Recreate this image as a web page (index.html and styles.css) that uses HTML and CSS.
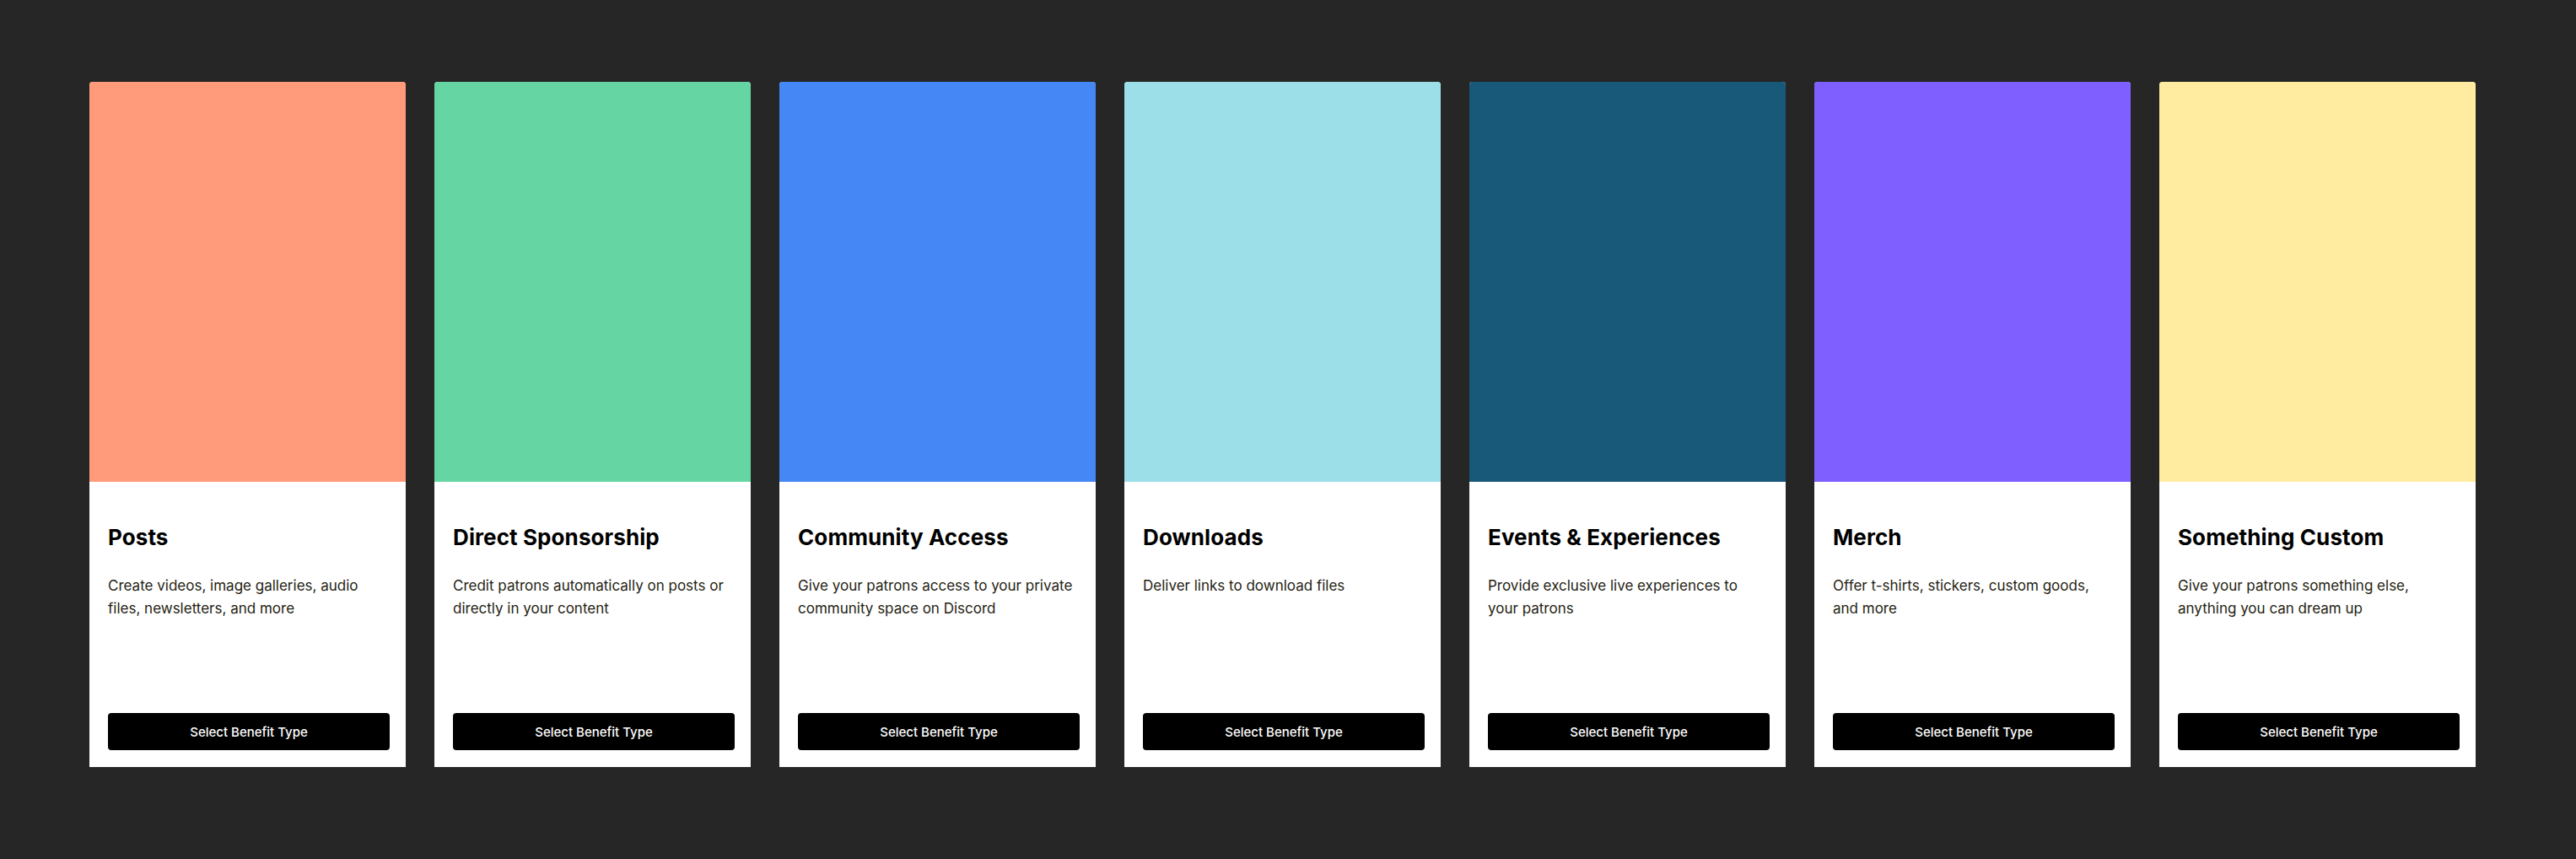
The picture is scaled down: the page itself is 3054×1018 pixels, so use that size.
FILE: index.html
```html
<!DOCTYPE html>
<html lang="en">
<head>
<meta charset="utf-8">
<title>Benefit types</title>
<link rel="stylesheet" href="styles.css">
</head>
<body>
<main class="benefits">
  <section class="card">
    <div class="swatch swatch-posts"></div>
    <div class="body">
      <h2 class="title">Posts</h2>
      <p class="desc">Create videos, image galleries, audio files, newsletters, and more</p>
      <button class="select">Select Benefit Type</button>
    </div>
  </section>
  <section class="card">
    <div class="swatch swatch-sponsor"></div>
    <div class="body">
      <h2 class="title">Direct Sponsorship</h2>
      <p class="desc">Credit patrons automatically on posts or directly in your content</p>
      <button class="select">Select Benefit Type</button>
    </div>
  </section>
  <section class="card">
    <div class="swatch swatch-community"></div>
    <div class="body">
      <h2 class="title">Community Access</h2>
      <p class="desc">Give your patrons access to your private community space on Discord</p>
      <button class="select">Select Benefit Type</button>
    </div>
  </section>
  <section class="card">
    <div class="swatch swatch-downloads"></div>
    <div class="body">
      <h2 class="title">Downloads</h2>
      <p class="desc">Deliver links to download files</p>
      <button class="select">Select Benefit Type</button>
    </div>
  </section>
  <section class="card">
    <div class="swatch swatch-events"></div>
    <div class="body">
      <h2 class="title">Events &amp; Experiences</h2>
      <p class="desc">Provide exclusive live experiences to your patrons</p>
      <button class="select">Select Benefit Type</button>
    </div>
  </section>
  <section class="card">
    <div class="swatch swatch-merch"></div>
    <div class="body">
      <h2 class="title">Merch</h2>
      <p class="desc">Offer t-shirts, stickers, custom goods, and more</p>
      <button class="select">Select Benefit Type</button>
    </div>
  </section>
  <section class="card">
    <div class="swatch swatch-custom"></div>
    <div class="body">
      <h2 class="title">Something Custom</h2>
      <p class="desc">Give your patrons something else, anything you can dream up</p>
      <button class="select">Select Benefit Type</button>
    </div>
  </section>
</main>
</body>
</html>
```
FILE: styles.css
```css
html, body {
  margin: 0;
  padding: 0;
  background: #262626;
  font-family: Inter, "Liberation Sans", sans-serif;
}

.benefits {
  display: flex;
  gap: 34px;
  padding: 97px 0 0 106px;
}

.card {
  width: 375px;
  flex: 0 0 375px;
  background: #ffffff;
  border-radius: 4px 4px 0 0;
  overflow: hidden;
  display: flex;
  flex-direction: column;
}

.swatch {
  height: 474px;
}

.swatch-posts { background: #ff9a7a; }
.swatch-sponsor { background: #65d6a3; }
.swatch-community { background: #4487f5; }
.swatch-downloads { background: #9ddfe8; }
.swatch-events { background: #185878; }
.swatch-merch { background: #7f5fff; }
.swatch-custom { background: #ffeca1; }

.body {
  height: 338px;
  box-sizing: border-box;
  padding: 50px 19px 20px 22px;
  display: flex;
  flex-direction: column;
}

.title {
  margin: 0;
  font-size: 26px;
  line-height: 32px;
  font-weight: 700;
  letter-spacing: 0.1px;
  color: #000000;
}

.desc {
  margin: 28px 0 0;
  font-size: 17px;
  line-height: 27px;
  color: #241e12;
}

.select {
  margin-top: auto;
  height: 44px;
  width: 100%;
  border: 0;
  border-radius: 4px;
  background: #000000;
  color: #ffffff;
  font-family: inherit;
  font-size: 15px;
  font-weight: 500;
  cursor: pointer;
}
```
